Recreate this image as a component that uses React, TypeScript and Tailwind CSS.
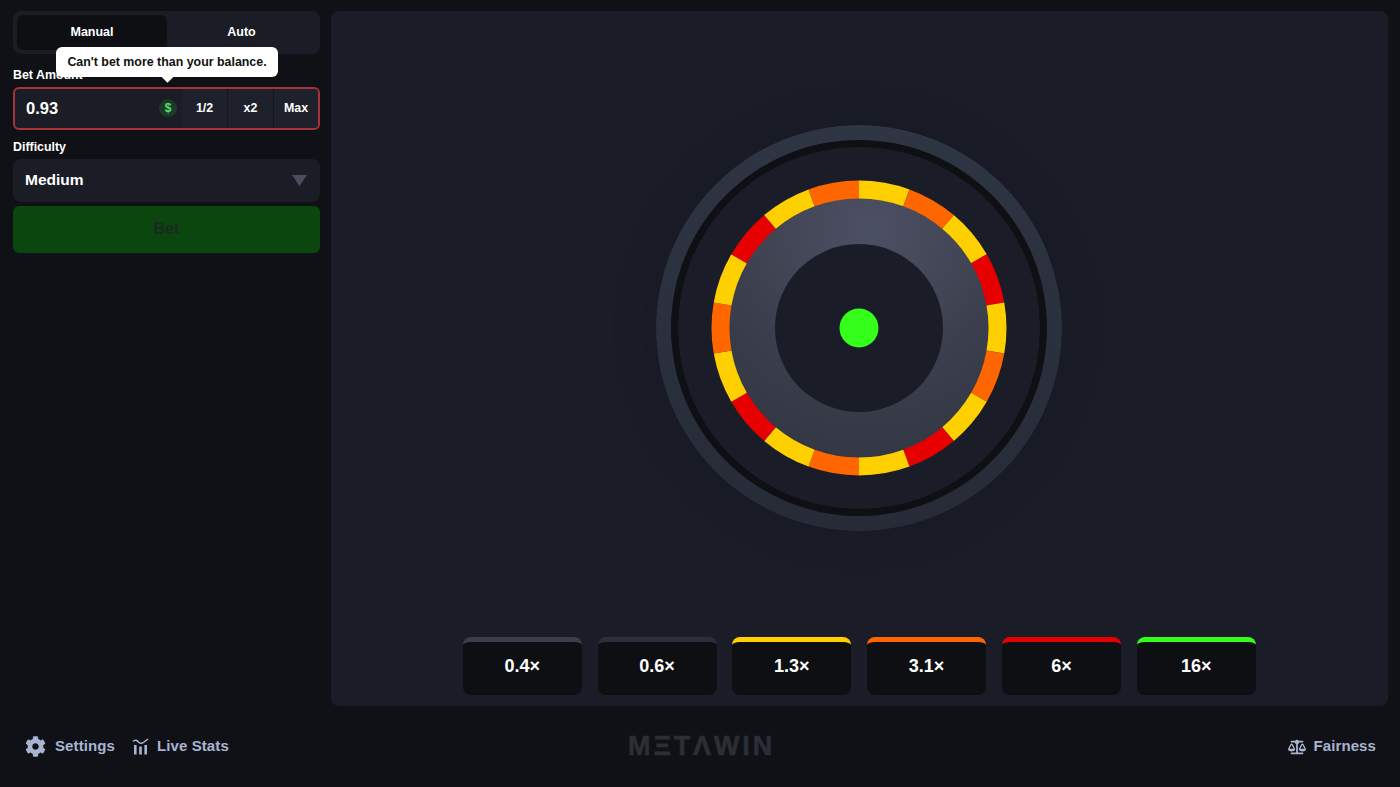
import { FaCog, FaBalanceScale } from "react-icons/fa";

const YELLOW = "#ffd000";
const ORANGE = "#ff6600";
const RED = "#e60000";

// clockwise from 12 o'clock, 20deg each
const segments = [
  YELLOW, ORANGE, YELLOW, RED, YELLOW, ORANGE, YELLOW, RED, YELLOW,
  ORANGE, YELLOW, RED, YELLOW, ORANGE, YELLOW, RED, YELLOW, ORANGE,
];

const multipliers = [
  { label: "0.4×", bar: "border-t-[#3b3f4c]" },
  { label: "0.6×", bar: "border-t-[#2b2f3b]" },
  { label: "1.3×", bar: "border-t-[#ffd000]" },
  { label: "3.1×", bar: "border-t-[#ff6600]" },
  { label: "6×", bar: "border-t-[#e60000]" },
  { label: "16×", bar: "border-t-[#33ff1a]" },
];

function polar(r: number, deg: number) {
  const a = ((deg - 90) * Math.PI) / 180;
  return `${203 + r * Math.cos(a)} ${203 + r * Math.sin(a)}`;
}

function segmentPath(i: number) {
  const from = i * 20;
  const to = from + 20;
  return `M${polar(147.5, from)} A147.5 147.5 0 0 1 ${polar(147.5, to)} L${polar(129.5, to)} A129.5 129.5 0 0 0 ${polar(129.5, from)} Z`;
}

function Wheel() {
  return (
    <svg width="406" height="406" viewBox="0 0 406 406" className="mr-[1px] rounded-full shadow-[0_0_50px_rgba(10,12,18,0.14)]">
      <defs>
        <radialGradient id="disc" cx="0.55" cy="0.12" r="0.95">
          <stop offset="0" stopColor="#4c5063" />
          <stop offset="0.55" stopColor="#3c404e" />
          <stop offset="1" stopColor="#323641" />
        </radialGradient>
        <linearGradient id="rim" x1="0" y1="0" x2="0" y2="1">
          <stop offset="0" stopColor="#2e3543" />
          <stop offset="1" stopColor="#262b37" />
        </linearGradient>
      </defs>
      <circle cx="203" cy="203" r="203" fill="url(#rim)" />
      <circle cx="203" cy="203" r="188" fill="#0e1014" />
      <circle cx="203" cy="203" r="181" fill="#1a1d27" />
      <circle cx="203" cy="203" r="130" fill="url(#disc)" />
      {segments.map((color, i) => (
        <path key={i} d={segmentPath(i)} fill={color} />
      ))}
      <circle cx="203" cy="203" r="84" fill="#1a1d27" />
      <circle cx="203" cy="203" r="19.5" fill="#33ff1a" />
    </svg>
  );
}

function StatsIcon() {
  return (
    <svg width="17" height="17" viewBox="0 0 17 17" fill="none" className="text-[#a9b4d0]">
      <path d="M1 3.500C3.500 1 5 2.500 7 4.500 9 6.500 11 5 16 1" stroke="currentColor" strokeWidth="1.5" />
      <path d="M2 7h2.600v9.500H2zM7.200 8.500h2.600v8H7.200zM12.400 7h2.600v9.500h-2.600z" fill="currentColor" />
    </svg>
  );
}

export default function App() {
  return (
    <div className="flex h-[787px] w-[1400px] flex-col overflow-hidden bg-[#0f1116] font-['Liberation_Sans',Arial,sans-serif] text-white">
      <div className="flex h-[706px] pt-[11px]">
        {/* sidebar */}
        <aside className="w-[331px] shrink-0 pl-[13px] pr-[11px]">
          <div className="relative">
            <div className="flex h-[43px] rounded-lg bg-[#1a1c26] p-[4px] text-[12.500px] font-bold">
              <button className="w-[150px] rounded-md bg-[#0e0f13] pb-[1px]">Manual</button>
              <button className="flex-1 pb-[1px]">Auto</button>
            </div>
            <div className="absolute left-[43px] top-[36px] z-10 flex h-[30px] w-[222px] items-center justify-center rounded-md bg-white text-[12.400px] font-bold text-[#111]">
              Can't bet more than your balance.
              <span className="absolute bottom-[-4px] left-[107px] h-[9px] w-[9px] rotate-45 bg-white" />
            </div>
          </div>

          <div className="mt-[14px] h-[19px] text-[12.400px] font-bold leading-[14px]">Bet Amount</div>
          <div className="flex h-[43px] overflow-hidden rounded-md border-2 border-[#a8323c] bg-[#1a1c26]">
            <div className="flex flex-1 items-center justify-between pb-[1px] pl-[11px] pr-[5px]">
              <span className="text-[16.500px] font-bold">0.93</span>
              <span className="flex h-[18px] w-[18px] items-center justify-center rounded-full bg-[#1d3a28] text-[12px] font-bold text-[#56e26c]">$</span>
            </div>
            <button className="w-[46px] border-r border-[#14161d] bg-[#1e212c] text-[12.400px] font-bold">1/2</button>
            <button className="w-[46px] border-r border-[#14161d] bg-[#1e212c] text-[12.400px] font-bold">x2</button>
            <button className="w-[44px] bg-[#1e212c] text-[12.400px] font-bold">Max</button>
          </div>

          <div className="mt-[10px] h-[19px] text-[12.400px] font-bold leading-[14px]">Difficulty</div>
          <div className="flex h-[43px] items-center justify-between rounded-lg bg-[#1a1c26] pb-[1px] pl-[12px] pr-[13px]">
            <span className="text-[15.500px] font-bold">Medium</span>
            <svg width="15" height="11" viewBox="0 0 15 11">
              <path d="M0 0h15L7.500 11z" fill="#4a4e5c" />
            </svg>
          </div>
          <button className="mt-[4px] h-[47px] w-full rounded-md bg-[#0a460d] pb-[1px] text-[16px] font-bold text-[#1a2a20]">Bet</button>
        </aside>

        {/* game */}
        <main className="mr-[12px] flex flex-1 flex-col items-center rounded-lg bg-[#1a1d27] pb-[11px] pt-[114px]">
          <Wheel />
          <div className="mr-[0.600px] mt-auto flex gap-[15.800px]">
            {multipliers.map((m) => (
              <div
                key={m.label}
                className={`flex h-[58px] w-[119px] items-center justify-center rounded-lg border-t-[5px] bg-[#0e0f13] pb-[5px] text-[18px] font-bold ${m.bar}`}
              >
                {m.label}
              </div>
            ))}
          </div>
        </main>
      </div>

      {/* footer */}
      <footer className="relative flex flex-1 items-center justify-between pl-[25px] pr-[24px] text-[15px] font-bold tracking-[0.1px] text-[#a9b4d0]">
        <div className="flex items-center gap-[17px]">
          <div className="flex items-center gap-[9px]">
            <FaCog size={21} />
            Settings
          </div>
          <div className="flex items-center gap-[8px]">
            <StatsIcon />
            Live Stats
          </div>
        </div>
        <div className="absolute left-[628px] text-[27px] font-bold tracking-[2.900px] text-[#2c2e35] [-webkit-text-stroke:0.6px_#2c2e35]">MΞTΛWIN</div>
        <div className="flex items-center gap-[8px]">
          <FaBalanceScale size={18} />
          Fairness
        </div>
      </footer>
    </div>
  );
}
